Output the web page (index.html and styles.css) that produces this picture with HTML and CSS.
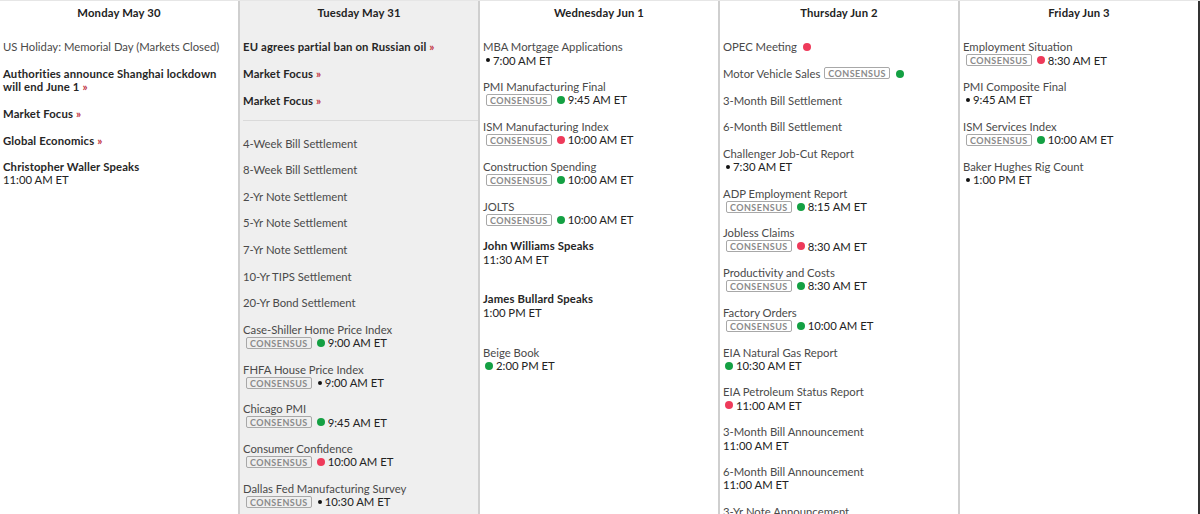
FILE: index.html
```html
<!DOCTYPE html>
<html>
<head>
<meta charset="utf-8">
<link rel="stylesheet" href="styles.css">
</head>
<body>
<div class="cal">
  <div class="col">
    <div class="day">Monday May 30</div>
    <div class="list">
      <div class="ev"><span class="name">US Holiday: Memorial Day (Markets Closed)</span></div>
      <div class="ev"><span class="title">Authorities announce Shanghai lockdown will end June 1 <span class="arr">»</span></span></div>
      <div class="ev"><span class="title">Market Focus <span class="arr">»</span></span></div>
      <div class="ev"><span class="title">Global Economics <span class="arr">»</span></span></div>
      <div class="ev"><span class="title">Christopher Waller Speaks</span><div class="time plain">11:00 AM ET</div></div>
    </div>
  </div>
  <div class="col today">
    <div class="day">Tuesday May 31</div>
    <div class="list">
      <div class="ev"><span class="title">EU agrees partial ban on Russian oil <span class="arr">»</span></span></div>
      <div class="ev"><span class="title">Market Focus <span class="arr">»</span></span></div>
      <div class="ev"><span class="title">Market Focus <span class="arr">»</span></span></div>
      <div class="sep"></div>
      <div class="ev"><span class="name">4-Week Bill Settlement</span></div>
      <div class="ev"><span class="name">8-Week Bill Settlement</span></div>
      <div class="ev"><span class="name">2-Yr Note Settlement</span></div>
      <div class="ev"><span class="name">5-Yr Note Settlement</span></div>
      <div class="ev"><span class="name">7-Yr Note Settlement</span></div>
      <div class="ev"><span class="name">10-Yr TIPS Settlement</span></div>
      <div class="ev"><span class="name">20-Yr Bond Settlement</span></div>
      <div class="ev"><span class="name">Case-Shiller Home Price Index</span><div class="time"><span class="badge">Consensus</span><span class="dot green"></span>9:00 AM ET</div></div>
      <div class="ev"><span class="name">FHFA House Price Index</span><div class="time"><span class="badge">Consensus</span><span class="dot black"></span>9:00 AM ET</div></div>
      <div class="ev"><span class="name">Chicago PMI</span><div class="time"><span class="badge">Consensus</span><span class="dot green"></span>9:45 AM ET</div></div>
      <div class="ev"><span class="name">Consumer Confidence</span><div class="time"><span class="badge">Consensus</span><span class="dot red"></span>10:00 AM ET</div></div>
      <div class="ev"><span class="name">Dallas Fed Manufacturing Survey</span><div class="time"><span class="badge">Consensus</span><span class="dot black"></span>10:30 AM ET</div></div>
    </div>
  </div>
  <div class="col">
    <div class="day">Wednesday Jun 1</div>
    <div class="list">
      <div class="ev"><span class="name">MBA Mortgage Applications</span><div class="time"><span class="dot black"></span>7:00 AM ET</div></div>
      <div class="ev"><span class="name">PMI Manufacturing Final</span><div class="time"><span class="badge">Consensus</span><span class="dot green"></span>9:45 AM ET</div></div>
      <div class="ev"><span class="name">ISM Manufacturing Index</span><div class="time"><span class="badge">Consensus</span><span class="dot red"></span>10:00 AM ET</div></div>
      <div class="ev"><span class="name">Construction Spending</span><div class="time"><span class="badge">Consensus</span><span class="dot green"></span>10:00 AM ET</div></div>
      <div class="ev"><span class="name">JOLTS</span><div class="time"><span class="badge">Consensus</span><span class="dot green"></span>10:00 AM ET</div></div>
      <div class="ev extra"><span class="title">John Williams Speaks</span><div class="time plain">11:30 AM ET</div></div>
      <div class="ev extra"><span class="title">James Bullard Speaks</span><div class="time plain">1:00 PM ET</div></div>
      <div class="ev"><span class="name">Beige Book</span><div class="time"><span class="dot green"></span>2:00 PM ET</div></div>
    </div>
  </div>
  <div class="col">
    <div class="day">Thursday Jun 2</div>
    <div class="list">
      <div class="ev"><span class="name">OPEC Meeting</span><span class="dot red inl"></span></div>
      <div class="ev"><span class="name">Motor Vehicle Sales</span><span class="badge inl">Consensus</span><span class="dot green inl"></span></div>
      <div class="ev"><span class="name">3-Month Bill Settlement</span></div>
      <div class="ev"><span class="name">6-Month Bill Settlement</span></div>
      <div class="ev"><span class="name">Challenger Job-Cut Report</span><div class="time"><span class="dot black"></span>7:30 AM ET</div></div>
      <div class="ev"><span class="name">ADP Employment Report</span><div class="time"><span class="badge">Consensus</span><span class="dot green"></span>8:15 AM ET</div></div>
      <div class="ev"><span class="name">Jobless Claims</span><div class="time"><span class="badge">Consensus</span><span class="dot red"></span>8:30 AM ET</div></div>
      <div class="ev"><span class="name">Productivity and Costs</span><div class="time"><span class="badge">Consensus</span><span class="dot green"></span>8:30 AM ET</div></div>
      <div class="ev"><span class="name">Factory Orders</span><div class="time"><span class="badge">Consensus</span><span class="dot green"></span>10:00 AM ET</div></div>
      <div class="ev"><span class="name">EIA Natural Gas Report</span><div class="time"><span class="dot green"></span>10:30 AM ET</div></div>
      <div class="ev"><span class="name">EIA Petroleum Status Report</span><div class="time"><span class="dot red"></span>11:00 AM ET</div></div>
      <div class="ev"><span class="name">3-Month Bill Announcement</span><div class="time plain">11:00 AM ET</div></div>
      <div class="ev"><span class="name">6-Month Bill Announcement</span><div class="time plain">11:00 AM ET</div></div>
      <div class="ev"><span class="name">3-Yr Note Announcement</span><div class="time plain">11:00 AM ET</div></div>
    </div>
  </div>
  <div class="col last">
    <div class="day">Friday Jun 3</div>
    <div class="list">
      <div class="ev"><span class="name">Employment Situation</span><div class="time"><span class="badge">Consensus</span><span class="dot red"></span>8:30 AM ET</div></div>
      <div class="ev"><span class="name">PMI Composite Final</span><div class="time"><span class="dot black"></span>9:45 AM ET</div></div>
      <div class="ev"><span class="name">ISM Services Index</span><div class="time"><span class="badge">Consensus</span><span class="dot green"></span>10:00 AM ET</div></div>
      <div class="ev"><span class="name">Baker Hughes Rig Count</span><div class="time"><span class="dot black"></span>1:00 PM ET</div></div>
    </div>
  </div>
</div>
</body>
</html>
```

FILE: styles.css
```css
html, body {
  margin: 0;
  padding: 0;
  background: #fff;
}
body {
  font-family: Lato, "Liberation Sans", sans-serif;
  font-size: 11.3px;
  line-height: 13.4px;
  color: #444;
  overflow: hidden;
  height: 514px;
}
.cal {
  display: flex;
  min-height: 514px;
  border-top: 1px solid #e6e6e6;
  box-sizing: border-box;
}
.col {
  flex: none;
  width: 232px;
  border-right: 2px solid #cfcfcf;
  padding: 0 3px;
}
.col.today {
  background: #efefef;
}
.col.last {
  border-right-color: #333;
}
.day {
  text-align: center;
  font-weight: 700;
  letter-spacing: 0.15px;
  color: #222;
  padding: 5px 0 7px;
}
.list {
  padding-top: 14px;
}
.ev {
  margin-bottom: 13.2px;
}
.ev.extra {
  padding-bottom: 13.4px;
}
.name {
  color: #4a4a4a;
}
.title {
  font-weight: 700;
  letter-spacing: 0.15px;
  color: #262626;
}
.arr {
  color: #c0313f;
}
.sep {
  border-top: 1px solid #dadada;
  margin: 0 -3px 15.4px 0;
}
.time {
  display: flex;
  align-items: center;
  height: 13.2px;
  color: #222;
  padding-left: 2px;
}
.time.plain {
  padding-left: 0;
}
.badge {
  display: inline-block;
  border: 1px solid #a8a8a8;
  border-radius: 2px;
  color: #8a8a8a;
  font-size: 9px;
  line-height: 9px;
  font-weight: 700;
  letter-spacing: 0.45px;
  text-transform: uppercase;
  padding: 1px 3px 0 3px;
  margin-left: 1px;
  margin-right: 5px;
}
.badge.inl {
  margin-left: 4px;
  margin-right: 0;
  vertical-align: 1px;
}
.dot {
  display: inline-block;
  width: 8px;
  height: 8px;
  border-radius: 50%;
  margin-right: 3px;
}
.dot.green { background: #14a043; }
.dot.red { background: #ee3a5a; }
.dot.black {
  width: 4px;
  height: 4px;
  background: #111;
  margin-left: 1px;
  margin-right: 3px;
}
.dot.inl {
  margin-left: 6px;
  vertical-align: 0;
}
```
